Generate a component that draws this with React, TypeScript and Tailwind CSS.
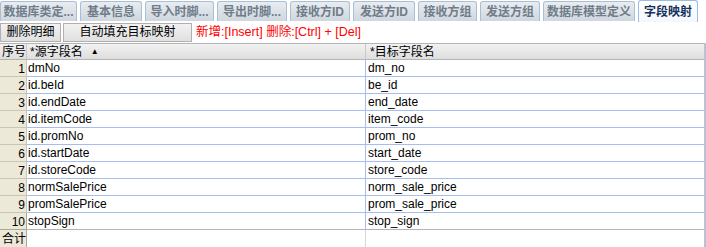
import React from "react";

const tabs: { label: string; w: string; active?: boolean }[] = [
  { label: "数据库类定...", w: "w-[77px]" },
  { label: "基本信息", w: "w-[62px]" },
  { label: "导入时脚...", w: "w-[69px]" },
  { label: "导出时脚...", w: "w-[70px]" },
  { label: "接收方ID", w: "w-[60px]" },
  { label: "发送方ID", w: "w-[62px]" },
  { label: "接收方组", w: "w-[59px]" },
  { label: "发送方组", w: "w-[60px]" },
  { label: "数据库模型定义", w: "w-[92px]" },
  { label: "字段映射", w: "w-[60px]", active: true },
];

const rows: [string, string][] = [
  ["dmNo", "dm_no"],
  ["id.beId", "be_id"],
  ["id.endDate", "end_date"],
  ["id.itemCode", "item_code"],
  ["id.promNo", "prom_no"],
  ["id.startDate", "start_date"],
  ["id.storeCode", "store_code"],
  ["normSalePrice", "norm_sale_price"],
  ["promSalePrice", "prom_sale_price"],
  ["stopSign", "stop_sign"],
];

export default function App() {
  return (
    <div
      className="w-[706px] h-[247px] bg-white overflow-hidden text-[12px] text-black"
      style={{ fontFamily: '"Liberation Sans", "Noto Sans CJK SC", sans-serif' }}
    >
      {/* tabs */}
      <div className="flex gap-[3px] h-[21px] items-end">
        {tabs.map((t) =>
          t.active ? (
            <div
              key={t.label}
              className={`${t.w} h-[22px] -mb-[1px] rounded-t-[3px] border border-b-0 border-[#99bbe8] bg-gradient-to-b from-[#ffffff] to-[#f4f8fd] flex items-center justify-center font-bold text-[#15315a] leading-none whitespace-nowrap`}
            >
              {t.label}
            </div>
          ) : (
            <div
              key={t.label}
              className={`${t.w} h-[20px] rounded-t-[3px] border border-b-0 border-[#a9bfd6] bg-gradient-to-b from-[#e9edf1] to-[#cfd6de] flex items-center justify-center font-bold text-[#6f7c89] leading-none whitespace-nowrap`}
            >
              {t.label}
            </div>
          )
        )}
      </div>

      {/* toolbar */}
      <div className="flex items-center h-[20px] mt-[1px] whitespace-nowrap">
        <div className="w-[61px] h-[19px] border border-[#b0b0b0] bg-gradient-to-b from-[#f2f2f2] to-[#e0e0e0] flex items-center justify-center leading-none">
          删除明细
        </div>
        <div className="ml-[2px] w-[129px] h-[19px] border border-[#b0b0b0] bg-gradient-to-b from-[#f2f2f2] to-[#e0e0e0] flex items-center justify-center leading-none">
          自动填充目标映射
        </div>
        <div className="ml-[4px] text-[#ff0000] leading-none text-[12.5px]">
          新增:[Insert] 删除:[Ctrl] + [Del]
        </div>
      </div>

      {/* grid */}
      <div className="mt-[1px] w-[706px] border-r-2 border-[#b9c2d2]">
        {/* header */}
        <div className="flex h-[17px] border-t border-b border-[#b4b4b4] bg-gradient-to-b from-[#f2f2f2] to-[#dedede] leading-none whitespace-nowrap">
          <div className="w-[27px] shrink-0 flex items-center pl-[2px] border-r border-[#c8c8c8] overflow-hidden">序号</div>
          <div className="w-[339px] shrink-0 flex items-center pl-[3px] border-r border-[#c8c8c8]">
            *源字段名
            <span className="ml-[8px] text-[8px]">▲</span>
          </div>
          <div className="flex-1 flex items-center pl-[4px]">*目标字段名</div>
        </div>
        {/* rows */}
        {rows.map(([src, dst], i) => (
          <div key={i} className="flex h-[17px] leading-none whitespace-nowrap">
            <div
              className={`w-[27px] shrink-0 bg-[#ece9d8] border-r border-[#aca899] flex items-end justify-end pb-[1px] pr-[1px] ${
                i === 9 ? "border-b border-[#aca899]" : "border-b border-[#c9c6b7]"
              }`}
            >
              {i + 1}
            </div>
            <div
              className={`w-[339px] shrink-0 flex items-center pl-[1px] border-r border-[#a5bdf0] ${
                i === 9 ? "border-b border-b-[#b4b4b4]" : "border-b border-b-[#a5bdf0]"
              }`}
            >
              {src}
            </div>
            <div
              className={`flex-1 flex items-center pl-[2px] ${
                i === 9 ? "border-b border-[#b4b4b4]" : "border-b border-[#a5bdf0]"
              }`}
            >
              {dst}
            </div>
          </div>
        ))}
        {/* footer */}
        <div className="flex h-[18px] leading-none whitespace-nowrap">
          <div className="w-[27px] shrink-0 bg-[#ece9d8] border-r border-[#aca899] flex items-center pl-[2px] overflow-hidden">合计</div>
          <div className="w-[339px] shrink-0 border-r border-[#d8d8d8]"></div>
          <div className="flex-1"></div>
        </div>
      </div>
    </div>
  );
}
